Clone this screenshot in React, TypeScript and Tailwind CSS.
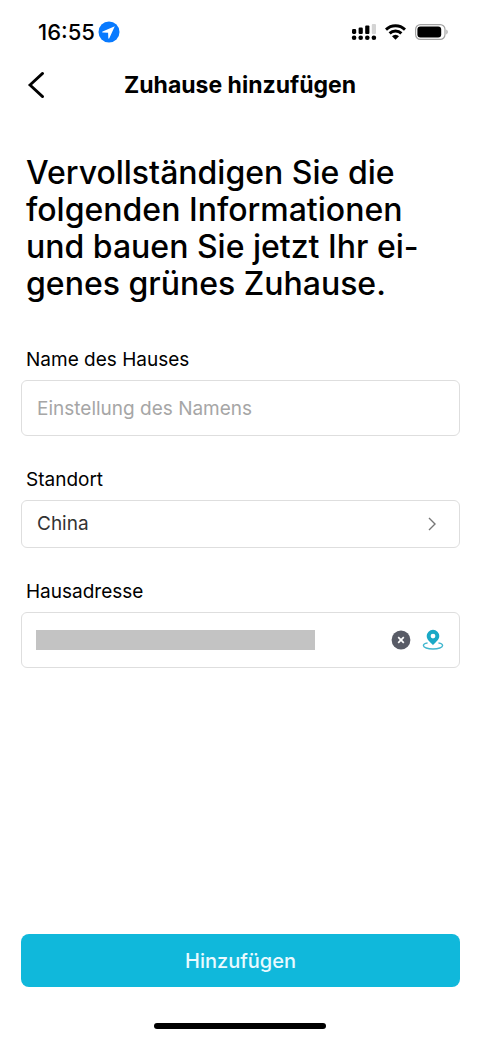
function StatusBar() {
  return (
    <div className="flex h-16 items-center justify-between pl-[38px] pr-[31px]">
      <div className="flex items-center gap-[3px]">
        <span className="text-[22px] font-medium leading-6">16:55</span>
        <svg width="22" height="22" viewBox="0 0 22 22" aria-hidden="true">
          <circle cx="11" cy="11" r="10.5" fill="#087aff" />
          <path d="M16.8 5.2 4.6 10.6c-.6.3-.5 1 .2 1l5.3.2.2 5.3c0 .7.8.8 1 .2Z" fill="#fff" />
        </svg>
      </div>
      <div className="flex items-center gap-2">
        <svg width="26" height="18" viewBox="0 0 26 18" aria-hidden="true">
          <rect x="1" y="6" width="4.2" height="5" rx="1.4" />
          <rect x="7.6" y="4.6" width="4.2" height="6.4" rx="1.2" />
          <rect x="14.2" y="2.6" width="4.2" height="8.4" rx="1" />
          <rect x="20.8" y="1" width="4.2" height="10" rx="1" fill="#d4d4d4" />
          <circle cx="3.1" cy="14.8" r="2.3" />
          <circle cx="9.7" cy="14.8" r="2.3" />
          <circle cx="16.3" cy="14.8" r="2.3" />
          <circle cx="22.9" cy="14.8" r="2.3" />
        </svg>
        <svg width="21" height="16" viewBox="0 0 21 16" aria-hidden="true">
          <g fill="none" stroke="#000" strokeWidth="2.9">
            <path d="M1 5.6a13.6 13.6 0 0 1 19 0" />
            <path d="M4.6 9.4a8.5 8.5 0 0 1 11.8 0" />
          </g>
          <path d="M10.5 15.8 7 12.3a4.8 4.8 0 0 1 7 0Z" />
        </svg>
        <svg width="35" height="18" viewBox="0 0 35 18" aria-hidden="true">
          <rect x="1.6" y="1.6" width="29.4" height="14.8" rx="4.8" fill="none" stroke="#a3a3a3" strokeWidth="1.2" />
          <rect x="3.4" y="3.4" width="23.8" height="11.2" rx="3" />
          <path d="M32.4 6.6c1.7.7 1.7 4.1 0 4.8Z" fill="#a3a3a3" />
        </svg>
      </div>
    </div>
  );
}

function PinIcon() {
  return (
    <svg width="22" height="22" viewBox="0 0 22 22" aria-hidden="true">
      <path
        d="M11 .8a6.3 6.3 0 0 0-6.3 6.3c0 3.9 4 6.5 6.3 9.1 2.3-2.6 6.3-5.2 6.3-9.1A6.3 6.3 0 0 0 11 .8Zm0 3.9a2.4 2.4 0 1 1 0 4.8 2.4 2.4 0 0 1 0-4.8Z"
        fill="#1aa9c6"
        fillRule="evenodd"
      />
      <path
        d="M5.6 13.9C3 14.4 1.4 15.3 1.4 16.6c0 1.9 4.3 3.4 9.6 3.4s9.6-1.5 9.6-3.4c0-1.3-1.6-2.2-4.2-2.7"
        fill="none"
        stroke="#3fb6ce"
        strokeWidth="1.4"
      />
    </svg>
  );
}

export default function App() {
  return (
    <div className="flex min-h-screen flex-col bg-white font-['Inter','Liberation_Sans',sans-serif] text-black">
      <StatusBar />
      <header className="grid h-[42px] grid-cols-[32px_1fr_32px] items-center px-5">
        <button type="button" aria-label="Zurück" className="flex h-8 items-center justify-center">
          <svg width="18" height="28" viewBox="0 0 18 28" fill="none" stroke="#000" strokeWidth="2.8" aria-hidden="true">
            <path d="M15.6 2.4 3 14l12.6 11.6" strokeLinecap="round" />
          </svg>
        </button>
        <h1 className="text-center text-[23px] font-bold leading-8">Zuhause hinzufügen</h1>
      </header>

      <form className="flex flex-1 flex-col pl-[21px] pr-5 pt-12" onSubmit={(e) => e.preventDefault()}>
        <h2 className="whitespace-nowrap pl-[5px] text-[32px] font-medium leading-[37px]">
          Vervollständigen Sie die
          <br />
          folgenden Informationen
          <br />
          und bauen Sie jetzt Ihr ei-
          <br />
          genes grünes Zuhause.
        </h2>

        <div className="mt-[46px] flex flex-col gap-2">
          <label htmlFor="name" className="pl-[5px] text-[19px] leading-6">
            Name des Hauses
          </label>
          <input
            id="name"
            type="text"
            placeholder="Einstellung des Namens"
            className="h-14 rounded-md border border-[#dedede] px-[15px] text-[19px] outline-none placeholder:text-[#a6a6a6]"
          />
        </div>

        <div className="mt-8 flex flex-col gap-2">
          <label htmlFor="location" className="pl-[5px] text-[19px] leading-6">
            Standort
          </label>
          <button
            id="location"
            type="button"
            className="flex h-12 items-center justify-between rounded-md border border-[#dedede] pl-[15px] pr-5 text-[19px] text-[#333]"
          >
            China
            <svg width="14" height="14" viewBox="0 0 14 14" fill="none" stroke="#777" strokeWidth="1.4" aria-hidden="true">
              <path d="m4 1 6 6-6 6" />
            </svg>
          </button>
        </div>

        <div className="mt-8 flex flex-col gap-2">
          <label htmlFor="address" className="pl-[5px] text-[19px] leading-6">
            Hausadresse
          </label>
          <div className="flex h-14 items-center rounded-md border border-[#dedede] pl-[14px] pr-[15px]">
            <input id="address" type="text" className="mr-[76px] h-5 min-w-0 flex-1 bg-[#c3c3c3] px-1 outline-none" />
            <button type="button" aria-label="Adresse löschen" className="mr-[11px]">
              <svg width="20" height="20" viewBox="0 0 20 20" aria-hidden="true">
                <circle cx="10" cy="10" r="9.4" fill="#585b66" />
                <path d="m7.2 7.2 5.6 5.6m0-5.6-5.6 5.6" stroke="#fff" strokeWidth="1.7" />
              </svg>
            </button>
            <button type="button" aria-label="Auf Karte wählen">
              <PinIcon />
            </button>
          </div>
        </div>

        <button type="submit" className="mt-auto h-[53px] rounded-lg bg-[#10b8db] text-xl font-medium text-[#eafaff]">
          Hinzufügen
        </button>
      </form>

      <footer className="flex h-[52px] items-end justify-center pb-[10px]">
        <div className="h-[6px] w-[172px] rounded-full bg-black" />
      </footer>
    </div>
  );
}
